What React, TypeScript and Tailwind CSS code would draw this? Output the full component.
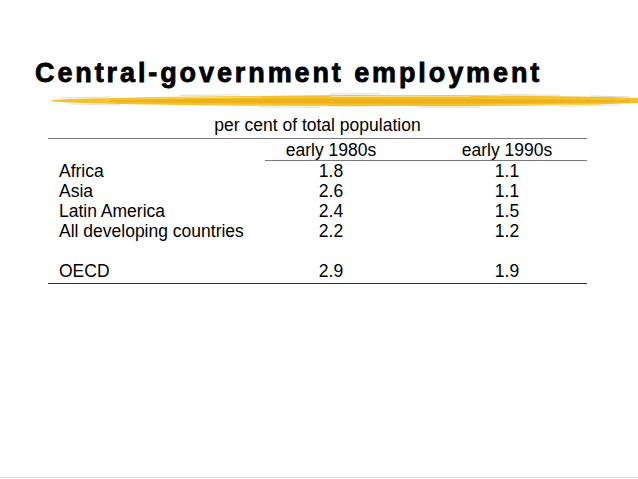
const rows = [
  { label: 'Africa', a: '1.8', b: '1.1' },
  { label: 'Asia', a: '2.6', b: '1.1' },
  { label: 'Latin America', a: '2.4', b: '1.5' },
  { label: 'All developing countries', a: '2.2', b: '1.2' },
  { label: '', a: '', b: '' },
  { label: 'OECD', a: '2.9', b: '1.9' },
]

function BrushStroke() {
  return (
    <svg width="638" height="25" viewBox="0 0 638 25" className="block">
      {/* main yellow band */}
      <path
        d="M52 13 L70 12 L90 11.5 L120 11 L150 10 L200 9.5 L250 9 L300 8.5 L350 8 L400 8.2 L450 8 L500 8.5 L540 9 L580 9.5 L610 10 L638 11 L638 16 L610 17 L580 18 L540 18.5 L500 19 L450 19.2 L400 19 L350 19.3 L300 19 L250 18.8 L200 18.2 L150 17.6 L120 17 L90 16.3 L70 15.6 L52 14.5 Z"
        fill="#F4C22E"
      />
      {/* darker core */}
      <path
        d="M110 13 L200 12 L320 11.5 L450 11.8 L560 12.5 L630 13.5 L630 15 L560 16 L450 16.8 L320 16.5 L200 15.8 L110 15 Z"
        fill="#EDB21A"
      />
      {/* light streaks */}
      <path d="M140 10.5 L260 9.6 L262 10.6 L142 11.4 Z" fill="#F8DC75" />
      <path d="M330 9 L470 8.8 L472 9.8 L332 10 Z" fill="#F9E08A" />
      <path d="M200 17.4 L330 18 L328 18.8 L198 18.2 Z" fill="#F7D35A" />
      <path d="M480 17.8 L600 16.8 L602 17.6 L482 18.6 Z" fill="#F8D868" />
      {/* faint dry-brush edges */}
      <path d="M60 11 L110 10 M180 8.4 L240 7.8 M330 7 L380 6.8 M500 7.6 L560 8.2 M590 9 L630 10" stroke="#C9C2A8" strokeWidth="0.6" fill="none" />
      <path d="M70 17 L120 18 M260 20 L320 20.4 M420 20.2 L480 20.3 M560 19.4 L620 18" stroke="#D6CFB2" strokeWidth="0.6" fill="none" />
    </svg>
  )
}

export default function App() {
  return (
    <div className="w-[638px] h-[479px] bg-white flex flex-col overflow-hidden font-['Liberation_Sans',Arial,sans-serif] text-black">
      <h1 className="pt-[59px] pl-[35px] h-[87px] text-[27px] leading-[28px] font-bold tracking-[2.9px] whitespace-nowrap [-webkit-text-stroke:0.8px_black]">
        Central-government employment
      </h1>

      <BrushStroke />

      <div className="ml-[48px] w-[539px] mt-[3px] text-[17.5px] leading-[20px]">
        <div className="h-[24px] text-center border-b border-[#7a7a7a]">per cent of total population</div>
        <div className="grid grid-cols-[217px_132px_190px] h-[22px] items-end">
          <div />
          <div className="col-span-2 grid grid-cols-[132px_190px] border-b border-[#7a7a7a]">
            <div className="text-center">early 1980s</div>
            <div className="text-center pl-[30px]">early 1990s</div>
          </div>
        </div>
        <div className="border-b border-[#333] pb-[2px]">
          {rows.map((r, i) => (
            <div key={i} className="grid grid-cols-[217px_132px_190px] h-[20px]">
              <div className="pl-[11px]">{r.label}</div>
              <div className="text-center">{r.a}</div>
              <div className="text-center pl-[30px]">{r.b}</div>
            </div>
          ))}
        </div>
      </div>

      <div className="mt-auto h-[2px] border-t border-[#d9d9d9] bg-white" />
    </div>
  )
}
